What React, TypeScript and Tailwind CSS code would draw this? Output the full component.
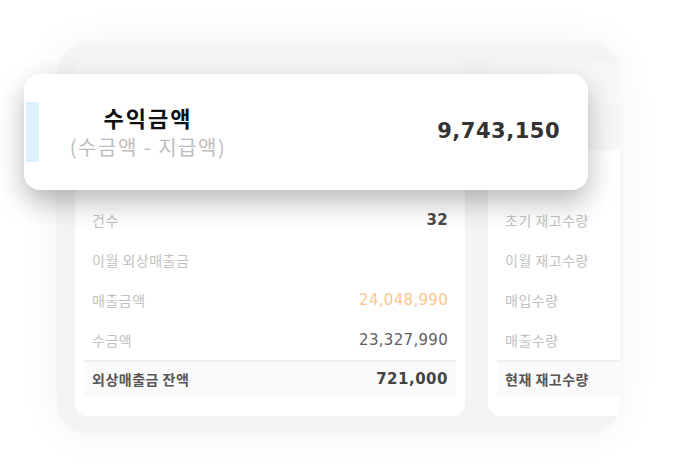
const kr = "font-['Noto_Sans_CJK_KR','Noto_Sans',sans-serif]";
const num = "font-['DejaVu_Sans','Noto_Sans_CJK_KR',sans-serif]";

type Row = { label: string; value?: string; tone?: "bold" | "orange" | "plain" };

const leftRows: Row[] = [
  { label: "건수", value: "32", tone: "bold" },
  { label: "이월 외상매출금" },
  { label: "매출금액", value: "24,048,990", tone: "orange" },
  { label: "수금액", value: "23,327,990", tone: "plain" },
];

const rightRows: Row[] = [
  { label: "초기 재고수량" },
  { label: "이월 재고수량" },
  { label: "매입수량" },
  { label: "매출수량" },
];

const valueClass = (tone?: Row["tone"]) => {
  if (tone === "bold") return "font-bold text-[#4a4a4a]";
  if (tone === "orange") return "text-[#fbc68e]";
  return "text-[#5f5f5f]";
};

const Card = ({
  rows,
  total,
  totalValue,
  className,
}: {
  rows: Row[];
  total: string;
  totalValue?: string;
  className: string;
}) => (
  <div className={`flex flex-col shrink-0 bg-white rounded-[12px] overflow-hidden pb-[19px] ${className}`}>
    <div className="h-[88px] bg-[#f7f7f7]" />
    <div className="flex flex-col pt-[50px] mx-[9px]">
      {rows.map((r) => (
        <div key={r.label} className="flex items-center justify-between h-[40px] px-[8px]">
          <span className={`${kr} text-[14px] tracking-[0.5px] text-[#c2c2c2] whitespace-nowrap`}>{r.label}</span>
          {r.value && (
            <span className={`${num} text-[15px] tracking-[0.3px] ${valueClass(r.tone)}`}>
              {r.value}
            </span>
          )}
        </div>
      ))}
      <div className="flex items-center justify-between h-[37px] px-[8px] bg-[#fafafa] border-t-2 border-[#f0f0f0]">
        <span className={`${kr} text-[14px] tracking-[0.5px] font-bold text-[#555] whitespace-nowrap`}>{total}</span>
        {totalValue && (
          <span className={`${num} text-[15px] font-bold tracking-[0.5px] text-[#444]`}>{totalValue}</span>
        )}
      </div>
    </div>
  </div>
);

const App = () => {
  return (
    <div className="relative w-[679px] h-[471px] bg-white overflow-hidden">
      <div className="ml-[57px] mt-[43px] w-[563px] h-[390px] rounded-[30px] bg-[#f4f4f4] shadow-[0_0_40px_rgba(0,0,0,0.06)] overflow-hidden">
        <div className="flex gap-[23px] pt-[19px] pl-[18px]">
          <Card rows={leftRows} total="외상매출금 잔액" totalValue="721,000" className="w-[390px]" />
          <Card rows={rightRows} total="현재 재고수량" className="w-[150px]" />
        </div>
      </div>

      <div className="absolute left-[24px] top-[74px] w-[564px] h-[116px] flex items-center bg-white rounded-[16px] shadow-[0_12px_28px_rgba(0,0,0,0.28)]">
        <div className="ml-[2px] w-[13px] h-[60px] bg-[#dcf1fc]" />
        <div className={`${kr} w-[218px] flex flex-col items-center`}>
          <span className="text-[22px] leading-[30px] font-bold tracking-[2px] text-[#111]">수익금액</span>
          <span className="text-[20px] leading-[30px] tracking-[1.5px] text-[#bdbdbd]">(수금액 - 지급액)</span>
        </div>
        <span className={`${num} ml-auto pr-[28px] text-[21px] font-bold tracking-[0.5px] text-[#333]`}>
          9,743,150
        </span>
      </div>
    </div>
  );
};

export default App;
